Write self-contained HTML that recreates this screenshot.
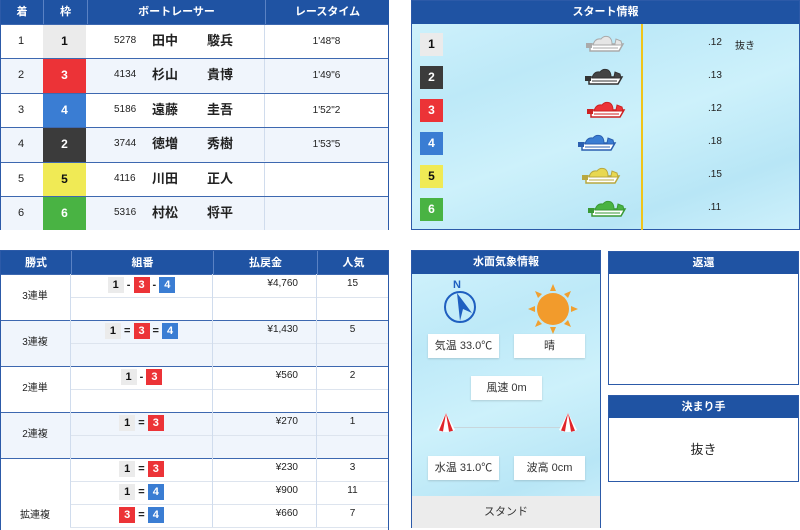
<!DOCTYPE html>
<html style="overflow:hidden;width:800px;height:530px"><head><meta charset="utf-8"><style>
*{box-sizing:border-box;margin:0;padding:0}
body{width:800px;height:530px;background:#fff;position:relative;overflow:hidden;font-family:"Liberation Sans","Noto Sans CJK JP",sans-serif;color:#222;font-size:11px}
.abs{position:absolute}
.hd{background:#1f53a3;color:#fff;font-weight:bold;font-size:11px;text-align:center;line-height:24px}
.bx{position:absolute;width:23px;height:23px;text-align:center;line-height:23px;font-weight:bold;font-size:12px}
.c1{background:#ebebeb;color:#111}.c2{background:#3b3b3b;color:#fff}.c3{background:#ec3337;color:#fff}.c4{background:#3a7dd3;color:#fff}.c5{background:#f0ea55;color:#111}.c6{background:#49b343;color:#fff}
.sb{display:inline-block;width:16px;height:16px;line-height:16px;text-align:center;font-weight:bold;font-size:11px;vertical-align:middle}
.card{position:absolute;background:#fff;text-align:center;line-height:24px;font-size:11px;color:#333;box-shadow:0 1px 2px rgba(0,0,0,.15)}
.water{background:linear-gradient(160deg,#d2f3fc 0%,#bde9f8 30%,#cdf1fb 55%,#b8e6f6 80%,#cdf0fb 100%)}
</style></head><body>

<div class="abs" style="left:0;top:0;width:389px;height:230px;border:1px solid #2c5aa8;border-top:none">
<div class="abs hd" style="left:0;top:0;width:388px;height:24px"></div>
<div class="abs hd" style="left:0;top:0;width:42px">着</div>
<div class="abs hd" style="left:42px;top:0;width:44px;border-left:1px solid #5a82c4">枠</div>
<div class="abs hd" style="left:86px;top:0;width:178px;border-left:1px solid #5a82c4">ボートレーサー</div>
<div class="abs hd" style="left:264px;top:0;width:124px;border-left:1px solid #5a82c4">レースタイム</div>
</div>
<div id="rows"></div>

<div class="abs water" style="left:411px;top:0;width:389px;height:230px;border:1px solid #2c5aa8">
<div class="hd" style="height:23px;line-height:23px">スタート情報</div>
<div class="abs" style="left:229px;top:23px;width:2px;height:206px;background:#f0c419"></div>
</div>
<div id="start"></div>

<div class="abs" style="left:0;top:250px;width:389px;height:280px;border:1px solid #2c5aa8;border-bottom:none">
<div class="abs hd" style="left:0;top:0;width:388px;height:24px"></div>
<div class="abs hd" style="left:0;top:0;width:70px">勝式</div>
<div class="abs hd" style="left:70px;top:0;width:142px;border-left:1px solid #5a82c4">組番</div>
<div class="abs hd" style="left:212px;top:0;width:104px;border-left:1px solid #5a82c4">払戻金</div>
<div class="abs hd" style="left:316px;top:0;width:72px;border-left:1px solid #5a82c4">人気</div>
</div>
<div id="pay"></div>

<div class="abs water" style="left:411px;top:250px;width:190px;height:278px;border:1px solid #2c5aa8">
<div class="hd" style="height:23px;line-height:23px">水面気象情報</div>
<svg class="abs" style="left:32px;top:26px" width="36" height="48" viewBox="0 0 36 48">
<text x="9" y="11" font-family="Liberation Sans" font-weight="bold" font-size="11" fill="#1f5fc0">N</text>
<circle cx="16" cy="30" r="15" fill="none" stroke="#1f5fc0" stroke-width="2"/>
<path d="M13 16 L28 36 L19 32 L16 44 Z" fill="#1f5fc0"/>
</svg>
<svg class="abs" style="left:115px;top:32px" width="52" height="52" viewBox="0 0 52 52">
<g fill="#f0a030">
<path d="M26 1 L29 8 L23 8Z"/><path d="M26 51 L29 44 L23 44Z"/><path d="M1 26 L8 23 L8 29Z"/><path d="M51 26 L44 23 L44 29Z"/>
<path d="M8 8 L15 11 L11 15Z"/><path d="M44 44 L37 41 L41 37Z"/><path d="M44 8 L41 15 L37 11Z"/><path d="M8 44 L11 37 L15 41Z"/>
</g>
<circle cx="26" cy="26" r="16" fill="#f29b2c"/>
</svg>
<div class="card" style="left:16px;top:83px;width:71px;height:24px">気温 33.0℃</div>
<div class="card" style="left:102px;top:83px;width:71px;height:24px">晴</div>
<div class="card" style="left:59px;top:125px;width:71px;height:24px">風速 0m</div>
<div class="abs" style="left:32px;top:176px;width:122px;height:1px;background:#c8d6dc"></div>
<svg class="abs" style="left:24px;top:161px" width="20" height="22" viewBox="0 0 20 22"><path d="M10 1 L19 18 Q10 22 1 18 Z" fill="#fff"/><path d="M10 1 L3 18.5 L7 19.5 Z M10 1 L13 19.8 L17 18.8 Z" fill="#e0242a"/></svg>
<svg class="abs" style="left:146px;top:161px" width="20" height="22" viewBox="0 0 20 22"><path d="M10 1 L19 18 Q10 22 1 18 Z" fill="#fff"/><path d="M10 1 L3 18.5 L7 19.5 Z M10 1 L13 19.8 L17 18.8 Z" fill="#e0242a"/></svg>
<div class="card" style="left:16px;top:205px;width:71px;height:24px">水温 31.0℃</div>
<div class="card" style="left:102px;top:205px;width:71px;height:24px">波高 0cm</div>
<div class="abs" style="left:0;top:245px;width:188px;height:32px;background:#ececec;text-align:center;line-height:32px;font-size:11px;color:#333">スタンド</div>
</div>

<div class="abs" style="left:608px;top:251px;width:191px;height:134px;border:1px solid #2c5aa8">
<div class="hd" style="height:22px;line-height:22px">返還</div></div>
<div class="abs" style="left:608px;top:395px;width:191px;height:87px;border:1px solid #2c5aa8">
<div class="hd" style="height:22px;line-height:22px">決まり手</div>
<div style="text-align:center;line-height:64px;font-size:13px">抜き</div></div>

<script>
var R=[[1,1,5278,"田中","駿兵","1'48\"8"],[2,3,4134,"杉山","貴博","1'49\"6"],[3,4,5186,"遠藤","圭吾","1'52\"2"],[4,2,3744,"徳増","秀樹","1'53\"5"],[5,5,4116,"川田","正人",""],[6,6,5316,"村松","将平",""]];
var h="";
R.forEach(function(r,i){var t=24+i*34.4;var bg=i%2?"#f0f5fc":"#fff";
h+='<div class="abs" style="left:1px;top:'+t+'px;width:387px;height:34.4px;background:'+bg+';border-top:1px solid #3d68b0"></div>';
h+='<div class="abs" style="left:0;top:'+t+'px;width:42px;line-height:34px;text-align:center;font-size:11px">'+r[0]+'</div>';
h+='<div class="abs c'+r[1]+'" style="left:43px;top:'+(t+1)+'px;width:43px;height:33.4px;line-height:33px;text-align:center;font-weight:bold;font-size:12px">'+r[1]+'</div>';
h+='<div class="abs" style="left:114px;top:'+t+'px;line-height:34px;font-size:10px">'+r[2]+'</div>';
h+='<div class="abs" style="left:152px;top:'+t+'px;line-height:34px;font-size:13px;font-weight:bold">'+r[3]+'</div>';
h+='<div class="abs" style="left:207px;top:'+t+'px;line-height:34px;font-size:13px;font-weight:bold">'+r[4]+'</div>';
h+='<div class="abs" style="left:264px;top:'+(t+1)+'px;width:124px;height:33px;border-left:1px solid #d0dced;line-height:34px;text-align:center;font-size:10px">'+r[5]+'</div>';
});
document.getElementById("rows").innerHTML=h;

var S=[[1,585,".12","#e6e6e6","#aaa"],[2,584,".13","#444","#333"],[3,586,".12","#ec3337","#c22"],[4,577,".18","#3a7dd3","#2a5fb0"],[5,581,".15","#e8d850","#b8a840"],[6,587,".11","#49b343","#3a9a35"]];
h="";
S.forEach(function(s,i){var cy=44+i*33;
h+='<div class="bx c'+s[0]+'" style="left:420px;top:'+(cy-11)+'px">'+s[0]+'</div>';
h+='<svg class="abs" style="left:'+s[1]+'px;top:'+(cy-10)+'px" width="40" height="20" viewBox="0 0 40 20"><path d="M5 10 L38 10 L34 17 L5 17 Z" fill="#fff" stroke="'+s[4]+'" stroke-width="1.5"/><path d="M8 11 Q10 4 16 5 Q19 1 24 3 Q27 5 27 10 L30 10 L31 5 L36 7 L37 11 Z" fill="'+s[3]+'" stroke="'+s[4]+'" stroke-width="1"/><rect x="1" y="9" width="6" height="5" fill="'+s[4]+'"/><line x1="8" y1="14" x2="33" y2="14" stroke="'+s[4]+'" stroke-width="1"/></svg>';
h+='<div class="abs" style="left:708px;top:'+(cy-7)+'px;font-size:10px">'+s[2]+'</div>';
});
h+='<div class="abs" style="left:735px;top:37px;font-size:10px">抜き</div>';
document.getElementById("start").innerHTML=h;

function sb(n){return '<span class="sb c'+n+'">'+n+'</span>'}
var P=[["3連単",[[sb(1)+' - '+sb(3)+' - '+sb(4),"¥4,760","15"],["","",""]]],
["3連複",[[sb(1)+' = '+sb(3)+' = '+sb(4),"¥1,430","5"],["","",""]]],
["2連単",[[sb(1)+' - '+sb(3),"¥560","2"],["","",""]]],
["2連複",[[sb(1)+' = '+sb(3),"¥270","1"],["","",""]]],
["拡連複",[[sb(1)+' = '+sb(3),"¥230","3"],[sb(1)+' = '+sb(4),"¥900","11"],[sb(3)+' = '+sb(4),"¥660","7"]]]];
h="";var t=274;
P.forEach(function(g,i){var n=g[1].length,H=n*23;if(i==4)H=72;var bg=i%2?"#f0f5fc":"#fff";
h+='<div class="abs" style="left:1px;top:'+t+'px;width:387px;height:'+H+'px;background:'+bg+';border-top:1px solid #3d68b0"></div>';
h+='<div class="abs" style="left:0;top:'+t+'px;width:70px;height:'+H+'px;line-height:'+(i==4?116:H)+'px;text-align:center;font-size:10px">'+g[0]+'</div>';
g[1].forEach(function(r,j){var y=t+j*23;
h+='<div class="abs" style="left:70px;top:'+y+'px;width:318px;height:23px;'+(j?'border-top:1px solid #dde4ee;':'')+'"></div>';
h+='<div class="abs" style="left:70px;top:'+y+'px;width:142px;height:23px;line-height:23px;text-align:center;font-weight:bold;border-left:1px solid #d0dced">'+r[0]+'</div>';
h+='<div class="abs" style="left:212px;top:'+y+'px;width:104px;height:23px;line-height:20px;text-align:right;padding-right:18px;font-size:10px;border-left:1px solid #d0dced">'+r[1]+'</div>';
h+='<div class="abs" style="left:316px;top:'+y+'px;width:72px;height:23px;line-height:20px;text-align:center;font-size:10px;border-left:1px solid #d0dced">'+r[2]+'</div>';
});
t+=H;});
h+='<div class="abs" style="left:70px;top:527px;width:318px;height:1px;background:#dde4ee"></div>';
h+='<div class="abs" style="left:388px;top:250px;width:1px;height:280px;background:#2c5aa8"></div>';
document.getElementById("pay").innerHTML=h;
</script>
</body></html>
